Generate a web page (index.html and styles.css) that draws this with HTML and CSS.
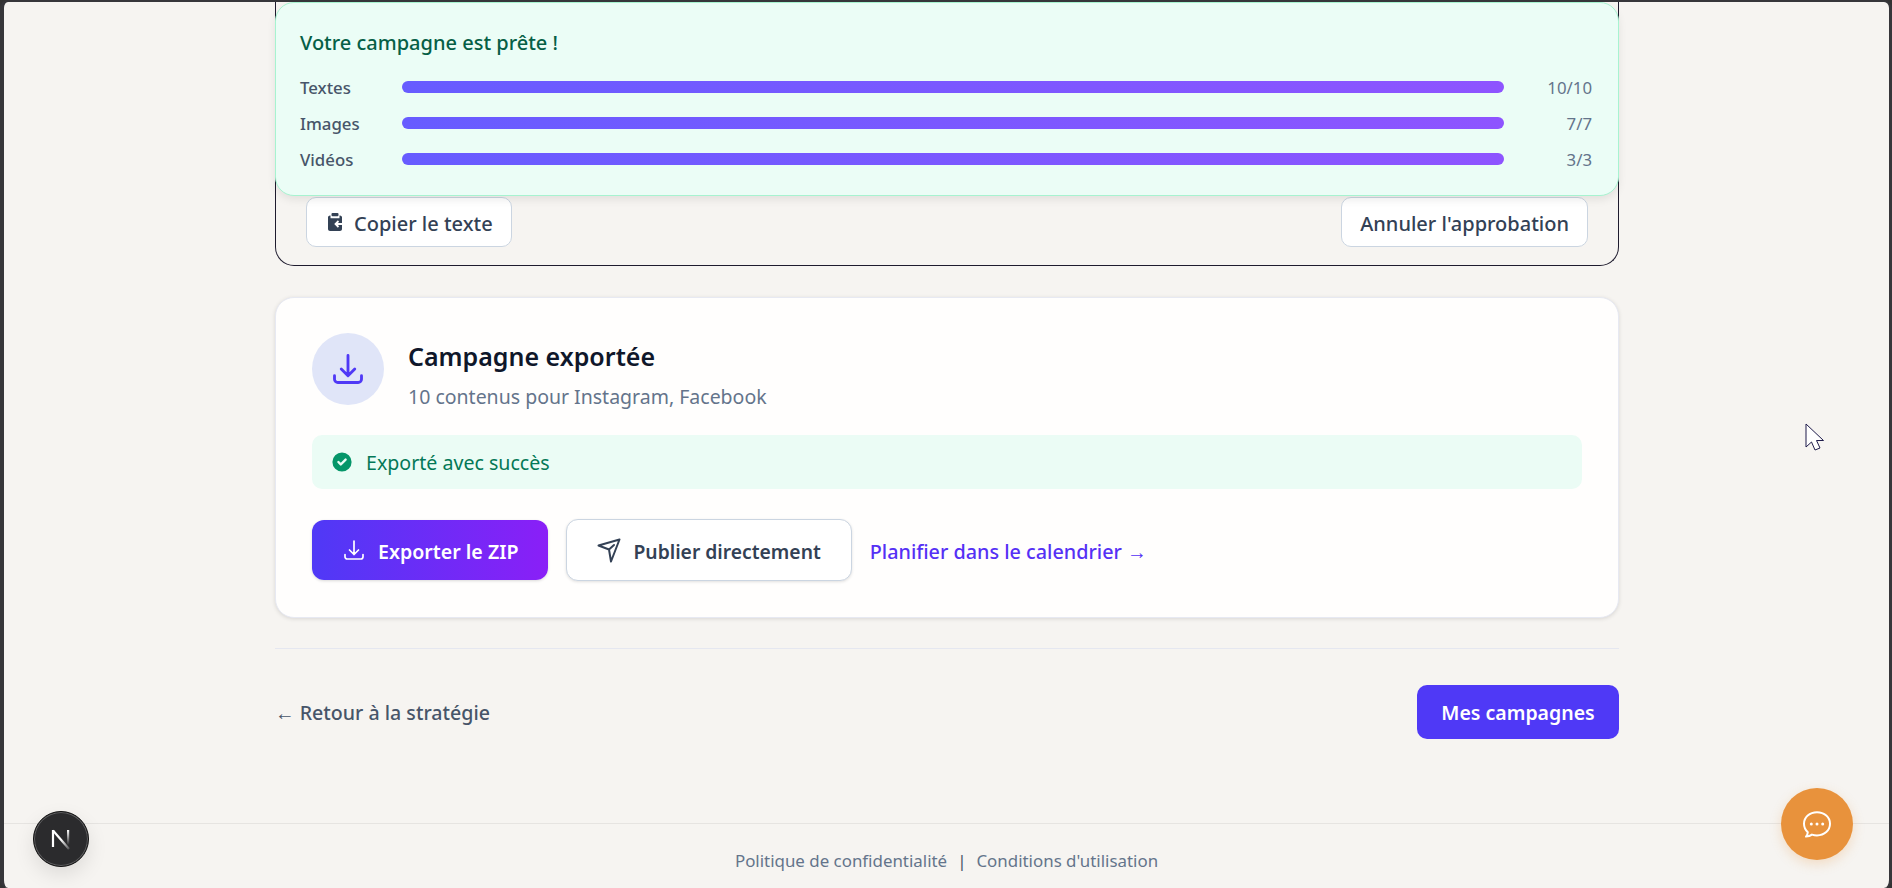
FILE: index.html
```html
<!DOCTYPE html>
<html lang="fr">
<head>
<meta charset="utf-8">
<title>Campagne exportée</title>
<link rel="stylesheet" href="styles.css">
</head>
<body>
<div class="frame">
  <main class="main">
    <section class="progress-panel">
      <h2 class="progress-title">Votre campagne est prête !</h2>
      <div class="progress-row"><span class="progress-label">Textes</span><span class="progress-bar"></span><span class="progress-count">10/10</span></div>
      <div class="progress-row"><span class="progress-label">Images</span><span class="progress-bar"></span><span class="progress-count">7/7</span></div>
      <div class="progress-row"><span class="progress-label">Vidéos</span><span class="progress-bar"></span><span class="progress-count">3/3</span></div>
    </section>

    <section class="review-card">
      <button class="btn-outline">
        <svg class="icon-clip" viewBox="0 0 14 18" aria-hidden="true"><rect x="3.500" y="0" width="7" height="3.200" rx="1" fill="currentColor"/><path fill="currentColor" d="M2 2.500h.5v2.700h9V2.500h.5c1.100 0 2 .9 2 2V16c0 1.100-.9 2-2 2H2c-1.100 0-2-.9-2-2V4.500c0-1.100.9-2 2-2Z"/><path d="M14 11H7.500M10.500 8 7.500 11l3 3" fill="none" stroke="#fff" stroke-width="1.800"/></svg>
        Copier le texte
      </button>
      <button class="btn-outline">Annuler l'approbation</button>
    </section>

    <section class="export-card">
      <div class="export-head">
        <div class="export-badge">
          <svg viewBox="0 0 24 24" fill="none" stroke="currentColor" stroke-width="1.900" stroke-linecap="round" stroke-linejoin="round" aria-hidden="true"><path d="M3 16.500v2.250A2.250 2.250 0 0 0 5.250 21h13.500A2.250 2.250 0 0 0 21 18.750V16.500M16.500 12 12 16.500m0 0L7.500 12m4.500 4.500V3"/></svg>
        </div>
        <div class="export-text">
          <h3 class="export-title">Campagne exportée</h3>
          <p class="export-sub">10 contenus pour Instagram, Facebook</p>
        </div>
      </div>
      <div class="success-bar">
        <svg viewBox="0 0 20 20" aria-hidden="true"><path fill="currentColor" fill-rule="evenodd" d="M10 18a8 8 0 100-16 8 8 0 000 16zm3.707-9.293a1 1 0 00-1.414-1.414L9 10.586 7.707 9.293a1 1 0 00-1.414 1.414l2 2a1 1 0 001.414 0l4-4z" clip-rule="evenodd"/></svg>
        Exporté avec succès
      </div>
      <div class="actions">
        <button class="btn-gradient">
          <svg viewBox="0 0 24 24" fill="none" stroke="currentColor" stroke-width="1.700" stroke-linecap="round" stroke-linejoin="round" aria-hidden="true"><path d="M3 16.500v2.250A2.250 2.250 0 0 0 5.250 21h13.500A2.250 2.250 0 0 0 21 18.750V16.500M16.500 12 12 16.500m0 0L7.500 12m4.500 4.500V3"/></svg>
          <span class="btn-text">Exporter le ZIP</span>
        </button>
        <button class="btn-publish">
          <svg viewBox="0 0 24 25" fill="none" stroke="currentColor" stroke-width="2" stroke-linecap="round" stroke-linejoin="round" aria-hidden="true"><path d="M22.500 1.500 1.500 7.500 12 11.500 14 23.500 22.500 1.500ZM12 11.500 17 7"/></svg>
          <span class="btn-text">Publier directement</span>
        </button>
        <a class="link-plan" href="#">Planifier dans le calendrier <span class="arrow">→</span></a>
      </div>
    </section>

    <hr class="divider">

    <nav class="page-nav">
      <a class="link-back" href="#"><span class="arrow">←</span> Retour à la stratégie</a>
      <button class="btn-primary">Mes campagnes</button>
    </nav>
  </main>

  <footer class="footer">
    <a href="#">Politique de confidentialité</a>
    <span class="footer-sep">|</span>
    <a href="#">Conditions d'utilisation</a>
  </footer>

  <div class="next-badge">
    <svg viewBox="0 0 24 24" aria-hidden="true">
      <defs><linearGradient id="ng" x1="0" y1="0" x2="1" y2="1"><stop offset="0.5" stop-color="#fff"/><stop offset="1" stop-color="#fff" stop-opacity="0.2"/></linearGradient>
      <linearGradient id="ng2" x1="0" y1="0" x2="0" y2="1"><stop offset="0" stop-color="#fff"/><stop offset="1" stop-color="#fff" stop-opacity="0"/></linearGradient></defs>
      <path d="M4 3.500 20 22" fill="none" stroke="url(#ng)" stroke-width="2.200"/>
      <path d="M4 3v17" fill="none" stroke="#fff" stroke-width="2.200"/>
      <rect x="18" y="3" width="2.200" height="15" fill="url(#ng2)"/>
    </svg>
  </div>

  <button class="chat-fab" aria-label="Chat">
    <svg viewBox="0 0 30 30" fill="none" aria-hidden="true"><path d="M15 2.200c7.400 0 13 5 13 11.600S22.400 25.400 15 25.400c-1.800 0-3.500-.3-5-.8-1.300 1-3.300 1.900-6 2 .9-1 1.700-2.400 1.800-4.300C3.300 20 2 17.100 2 13.800 2 7.200 7.600 2.200 15 2.200Z" stroke="#fff" stroke-width="2" stroke-linejoin="round"/><circle cx="9.300" cy="14" r="1.500" fill="#fff"/><circle cx="15" cy="14" r="1.500" fill="#fff"/><circle cx="20.700" cy="14" r="1.500" fill="#fff"/></svg>
  </button>

  <svg class="cursor" viewBox="0 0 19 28" aria-hidden="true"><path d="M1 1v23l5.500-5 3.500 8 5-2-3.500-7.500h7Z" fill="#fff" stroke="#1e1b4b" stroke-width="1"/></svg>
</div>
</body>
</html>
```
FILE: styles.css
```css
* { box-sizing: border-box; }
html, body { margin: 0; height: 100%; }
body {
  font-family: "Noto Sans", "Open Sans", Arial, sans-serif;
  background: #333;
  overflow: hidden;
}
button { font-family: inherit; cursor: pointer; }
a { text-decoration: none; }

.frame {
  position: relative;
  width: 1892px;
  height: 888px;
  background: #f6f4f1;
  border-style: solid;
  border-color: #36363a;
  border-width: 2px 3px 0 4px;
  border-radius: 8px;
  overflow: hidden;
}
.main {
  position: relative;
  width: 1344px;
  margin-left: 271px;
}
.arrow { font-family: "Liberation Sans", Arial, sans-serif; }

/* overlay panel */
.progress-panel {
  position: absolute;
  z-index: 2;
  top: 0;
  left: 0;
  right: 0;
  height: 194px;
  padding: 26px 26px 0 24px;
  background: #ebfdf6;
  border: 1px solid #a7f3d0;
  border-radius: 19px;
  box-shadow: 0 4px 8px rgba(0,0,0,.08);
}
.progress-title {
  margin: 0 0 12px;
  font-size: 20px;
  line-height: 28px;
  font-weight: 500;
  color: #065f46;
}
.progress-row {
  display: flex;
  align-items: center;
  height: 36px;
  font-size: 16.800px;
}
.progress-label { width: 102px; font-weight: 500; color: #475569; }
.progress-bar {
  flex: 1;
  height: 12px;
  border-radius: 6px;
  background: linear-gradient(90deg, #675cff, #8e54ff);
}
.progress-count { width: 88px; text-align: right; color: #64748b; }

/* first card */
.review-card {
  display: flex;
  justify-content: space-between;
  padding: 195px 30px 18px;
  background: transparent;
  border: 1px solid #1e1b2e;
  border-top: 0;
  border-radius: 0 0 19px 19px;
  margin-bottom: 31px;
}
.btn-outline {
  display: flex;
  align-items: center;
  gap: 12px;
  height: 50px;
  padding: 2px 18px 0;
  font-size: 20px;
  font-weight: 500;
  color: #334155;
  background: #fff;
  border: 1px solid #cbd5e1;
  border-radius: 10px;
}
.icon-clip { width: 14px; height: 18px; margin: -2px 0 0 3px; }

/* export card */
.export-card {
  height: 321px;
  padding: 35px 36px 0;
  background: #fffefd;
  border: 1px solid #e7e9f2;
  border-radius: 19px;
  box-shadow: 0 1px 4px rgba(0,0,0,.12);
}
.export-head {
  display: flex;
  align-items: flex-start;
  gap: 24px;
  height: 72px;
  margin-bottom: 30px;
}
.export-badge {
  display: flex;
  align-items: center;
  justify-content: center;
  width: 72px;
  height: 72px;
  border-radius: 50%;
  background: #e0e5f8;
  color: #4f39f6;
}
.export-badge svg { width: 36px; height: 36px; }
.export-text { padding-top: 7px; }
.export-title {
  margin: 0 0 11px;
  font-size: 25px;
  line-height: 32px;
  font-weight: 600;
  color: #0f172a;
}
.export-sub {
  margin: 0;
  font-size: 19.500px;
  line-height: 28px;
  color: #64748b;
}
.success-bar {
  display: flex;
  align-items: center;
  gap: 12px;
  height: 54px;
  padding: 0 18px;
  margin-bottom: 30px;
  background: #ebfcf5;
  border-radius: 10px;
  font-size: 19.600px;
  color: #047857;
}
.success-bar svg { width: 24px; height: 24px; color: #059669; }
.actions {
  display: flex;
  align-items: center;
  gap: 18px;
}
.btn-gradient, .btn-publish {
  display: flex;
  align-items: center;
  font-weight: 600;
}
.btn-text { padding-top: 2px; }
.btn-gradient {
  gap: 12px;
  height: 60px;
  padding: 0 30px;
  font-size: 19.600px;
  color: #fff;
  border: 0;
  border-radius: 12px;
  background: linear-gradient(90deg, #4f39f6, #8a1ff7);
  box-shadow: 0 1px 3px rgba(0,0,0,.15);
}
.btn-publish {
  gap: 12px;
  height: 62px;
  padding: 0 30px;
  font-size: 19.300px;
  color: #334155;
  background: #fff;
  border: 1px solid #cbd5e1;
  border-radius: 12px;
  box-shadow: 0 1px 3px rgba(0,0,0,.12);
}
.btn-gradient svg { width: 24px; height: 24px; }
.btn-publish svg { width: 24px; height: 25px; }
.link-plan {
  padding-top: 2px;
  font-size: 19.800px;
  font-weight: 500;
  color: #5530f5;
}

.divider {
  margin: 30px 0 36px;
  border: 0;
  border-top: 1px solid #e5e7f0;
}
.page-nav {
  display: flex;
  align-items: center;
  justify-content: space-between;
}
.link-back {
  padding-top: 1px;
  font-size: 19.600px;
  font-weight: 500;
  color: #475569;
}
.btn-primary {
  height: 54px;
  width: 202px;
  padding: 1px 0 0;
  font-size: 19.500px;
  font-weight: 600;
  color: #fff;
  background: #4f39f6;
  border: 0;
  border-radius: 10px;
}

.footer {
  position: absolute;
  left: 0;
  right: 0;
  top: 821px;
  height: 65px;
  padding-top: 25px;
  display: flex;
  justify-content: center;
  gap: 10px;
  border-top: 1px solid #e6e4e1;
  font-size: 16.900px;
  line-height: 24px;
  color: #64748b;
}
.footer a { color: #64748b; }
.footer-sep { color: #475569; }

.next-badge {
  position: absolute;
  left: 29px;
  top: 809px;
  width: 56px;
  height: 56px;
  display: flex;
  align-items: center;
  justify-content: center;
  border-radius: 50%;
  background: #2b2b2d;
  border: 1px solid #111;
  box-shadow: inset 0 0 0 1px rgba(255,255,255,.25), 0 8px 20px rgba(0,0,0,.1);
}
.next-badge svg { width: 24px; height: 24px; }
.chat-fab {
  position: absolute;
  left: 1777px;
  top: 786px;
  width: 72px;
  height: 72px;
  padding: 2px 0 0;
  display: flex;
  align-items: center;
  justify-content: center;
  border: 0;
  border-radius: 50%;
  background: #e8923c;
  box-shadow: 0 4px 12px rgba(232,146,60,.25);
}
.chat-fab svg { width: 30px; height: 30px; }
.cursor {
  position: absolute;
  left: 1801px;
  top: 421px;
  width: 19px;
  height: 28px;
}
```
